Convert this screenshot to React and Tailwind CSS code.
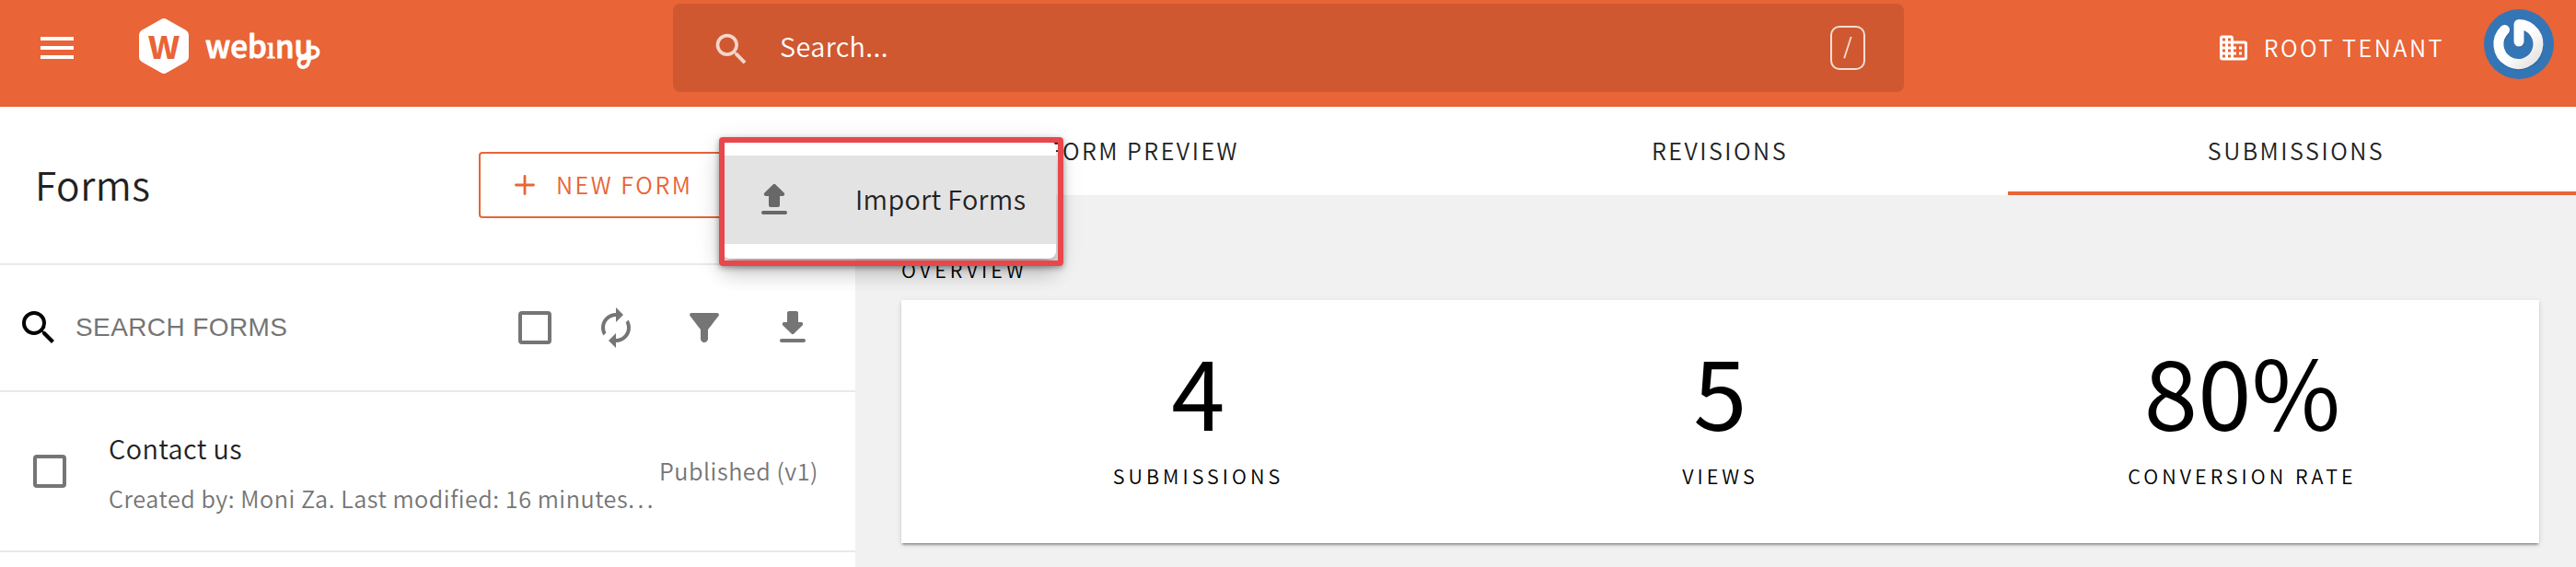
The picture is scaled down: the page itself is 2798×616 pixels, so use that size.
import { MdMenu, MdSearch, MdAutorenew } from "react-icons/md";

function Logo() {
  return (
    <div className="ml-[65px] flex h-[116px] w-[200px] shrink-0 items-start pt-5">
      <svg className="h-[60px] w-[54px] shrink-0 overflow-visible" viewBox="0 0 54 60">
        <path
          fill="#fff"
          d="M24 .9Q27-.9 30 .9L50.500 12.500Q54 14.600 54 18.500V41.500Q54 45.400 50.500 47.500L30 59.100Q27 60.900 24 59.100L3.500 47.500Q0 45.400 0 41.500V18.500Q0 14.600 3.500 12.500Z"
        />
        <text x="9" y="44" textLength="36" lengthAdjust="spacingAndGlyphs" fontFamily="Noto Sans CJK SC" fontWeight="700" fontSize="44" fill="#e96437">
          w
        </text>
      </svg>
      <svg className="ml-[17px] h-[60px] w-[130px] shrink-0 overflow-visible" viewBox="0 0 130 60" aria-label="webiny">
        <text x="1" y="42.5" textLength="117" lengthAdjust="spacingAndGlyphs" fontFamily="Noto Sans CJK SC" fontWeight="500" fontSize="34" fill="#fff" stroke="#fff" strokeWidth="1" strokeLinejoin="round">
          webınu
        </text>
        <path d="M117 31.500C124.500 30.500 126.500 40.500 118 42.500C111 44 103.500 41 102.500 47.500C101.500 54.500 112 55 113 47.500L114 45" fill="none" stroke="#fff" strokeWidth="4" strokeLinecap="round" />
      </svg>
    </div>
  );
}

function TenantIcon() {
  return (
    <svg className="mt-[2px] mr-[15px] size-9" viewBox="0 0 24 24" fill="currentColor">
      <path
        fillRule="evenodd"
        d="M4 3h6a2 2 0 0 1 2 2v2h8a2 2 0 0 1 2 2v10a2 2 0 0 1-2 2H4a2 2 0 0 1-2-2V5a2 2 0 0 1 2-2zM4 5v2h2V5zM8 5v2h2V5zM4 9v2h2V9zM8 9v2h2V9zM4 13v2h2v-2zM8 13v2h2v-2zM4 17v2h2v-2zM8 17v2h2v-2zM12 9h8v10h-8v-2h2v-2h-2v-2h2v-2h-2zM16 11v2h2v-2zM16 15v2h2v-2z"
      />
    </svg>
  );
}

function Avatar() {
  return (
    <svg className="mt-[10px] mr-6 size-[76px] shrink-0" viewBox="0 0 76 76">
      <defs>
        <linearGradient id="ring" x1="0" y1="0" x2="1" y2="1">
          <stop offset=".5" stopColor="#fff" />
          <stop offset="1" stopColor="#e2e0de" />
        </linearGradient>
      </defs>
      <circle cx="38" cy="38" r="38" fill="#3475b5" />
      <g fill="none" strokeLinecap="round" strokeLinejoin="round" strokeWidth="11">
        <path d="M22.500 22.500A21.500 21.500 0 1 0 38 16.500V35" stroke="#1f5288" strokeOpacity=".45" transform="translate(.6 1.2)" />
        <path d="M22.500 22.500A21.500 21.500 0 1 0 38 16.500V35" stroke="url(#ring)" />
      </g>
    </svg>
  );
}

function Header() {
  return (
    <header className="flex h-[116px] shrink-0 items-start bg-[#e96437] text-white">
      <MdMenu className="mt-7 ml-[38px] size-12 shrink-0" />
      <Logo />
      <div className="ml-[380px] mt-1 flex h-24 w-[1337px] shrink-0 items-center rounded-lg bg-[#cf5830] pr-[42px] pl-[41px]">
        <MdSearch className="mt-[2px] size-[45px] text-white/75" />
        <span className="ml-[30px] pb-[3px] text-[28.8px] leading-none tracking-[0.4px]">Search...</span>
        <span className="ml-auto flex h-12 w-[38px] items-center justify-center rounded-[10px] border-2 border-white/80 pb-[7px] text-[24px] leading-none text-white/90">
          /
        </span>
      </div>
      <div className="ml-auto flex h-[102px] items-center pr-[43px] text-[25.2px] leading-none tracking-[2.5px]">
        <TenantIcon />
        <span className="pt-[2px]">ROOT TENANT</span>
      </div>
      <Avatar />
    </header>
  );
}

function Checkbox() {
  return <span className="size-9 shrink-0 rounded-[4px] border-4 border-[#757575]" />;
}

function FormsPanel() {
  return (
    <section className="flex w-[929px] shrink-0 flex-col">
      <div className="flex h-[172px] items-center justify-between border-b-2 border-[#e9e9e9] pl-[38px]">
        <h1 className="pb-[2px] text-[42.5px] leading-none tracking-[0.5px] text-[#222]">Forms</h1>
        <button className="flex h-[72px] w-[409px] items-center rounded-[4px] border-2 border-[#e96437] pl-[37px] text-[#e96437]">
          <svg className="size-[22px]" viewBox="0 0 22 22" stroke="currentColor" strokeWidth="2.8" strokeLinecap="round">
            <path d="M1.500 11h19M11 1.500v19" />
          </svg>
          <span className="ml-[23px] text-[25.2px] leading-none tracking-[2.5px]">NEW FORM</span>
        </button>
      </div>

      <div className="flex h-[138px] items-center border-b-2 border-[#e9e9e9] pr-11 pl-[18px] text-[#757575]">
        <MdSearch className="size-12 text-black" />
        <span className="ml-4 font-['Liberation_Sans',Arial,sans-serif] text-[28px] leading-none tracking-[0.4px]">SEARCH FORMS</span>
        <div className="ml-auto flex items-center gap-12">
          <div className="-mr-[2px]">
            <div className="flex size-9">
              <Checkbox />
            </div>
          </div>
          <MdAutorenew className="size-12" />
          <svg className="size-12" viewBox="0 0 24 24" fill="currentColor">
            <path d="M4.250 5.610C6.570 8.590 10 13 10 13v5c0 1.100.9 2 2 2s2-.9 2-2v-5s3.430-4.410 5.750-7.390C20.260 4.950 19.790 4 18.950 4H5.040c-.83 0-1.300.95-.79 1.610z" />
          </svg>
          <svg className="size-12" viewBox="0 0 24 24" fill="currentColor">
            <path d="M16.590 9H15V4c0-.55-.45-1-1-1h-4c-.55 0-1 .45-1 1v5H7.410c-.89 0-1.340 1.080-.71 1.710l4.590 4.590c.39.39 1.020.39 1.410 0l4.590-4.590c.63-.63.19-1.710-.7-1.710zM5 19c0 .55.45 1 1 1h12c.55 0 1-.45 1-1s-.45-1-1-1H6c-.55 0-1 .45-1 1z" />
          </svg>
        </div>
      </div>

      <div className="flex h-[174px] items-center border-b-2 border-[#e9e9e9] pr-10 pl-9">
        <Checkbox />
        <div className="ml-[46px] flex flex-col gap-[18px] pt-[3px]">
          <div className="text-[28.8px] leading-9 tracking-[0.4px] text-[#222]">Contact us</div>
          <div className="text-[25.2px] leading-9 tracking-[0.53px] whitespace-nowrap text-[#757575]">
            Created by: Moni Za. Last modified: 16 minutes<span className="tracking-[3.5px]">...</span>
          </div>
        </div>
        <div className="ml-auto text-[25.2px] leading-none tracking-[0.55px] whitespace-nowrap text-[#757575]">Published (v1)</div>
      </div>
    </section>
  );
}

function Tab({ label, active }) {
  return (
    <div className="flex w-[626px] shrink-0 flex-col">
      <div className="flex h-[92px] items-center justify-center pt-1 text-[25.2px] leading-none tracking-[2.5px] text-[#222]">{label}</div>
      <div className={active ? "h-1 bg-[#e96437]" : "h-1"} />
    </div>
  );
}

function Stat({ value, label }) {
  return (
    <div className="flex flex-1 flex-col items-center text-black">
      <div className="text-[105px] leading-none font-normal">{value}</div>
      <div className="mt-[30px] text-[21.6px] leading-6 tracking-[4px]">{label}</div>
    </div>
  );
}

function Details() {
  return (
    <section className="flex min-w-0 flex-1 flex-col overflow-hidden">
      <div className="flex h-24 shrink-0">
        <Tab label="FORM PREVIEW" />
        <Tab label="REVISIONS" />
        <Tab label="SUBMISSIONS" active />
      </div>
      <div className="flex-1 bg-[#f1f1f1] pt-[69px] pr-10 pl-[50px]">
        <h2 className="text-[21.6px] leading-6 tracking-[4.1px] text-black">OVERVIEW</h2>
        <div className="mt-[21px] flex h-[264px] bg-white px-[39px] pt-[44px] shadow-[0_4px_2px_-2px_rgba(0,0,0,0.2),0_2px_2px_0_rgba(0,0,0,0.14),0_2px_6px_0_rgba(0,0,0,0.12)]">
          <Stat value="4" label="SUBMISSIONS" />
          <Stat value="5" label="VIEWS" />
          <Stat value="80%" label="CONVERSION RATE" />
        </div>
      </div>
    </section>
  );
}

function ImportMenu() {
  return (
    <>
      <div className="absolute top-[153px] left-[785px] h-32 w-[362px] rounded-lg bg-white pt-4 shadow-[0_10px_10px_-6px_rgba(0,0,0,0.2),0_16px_20px_2px_rgba(0,0,0,0.14),0_6px_28px_4px_rgba(0,0,0,0.12)]">
        <div className="flex h-24 items-center bg-[#e3e3e3] pl-8">
          <svg className="size-12 text-[#686868]" viewBox="0 0 24 24" fill="currentColor">
            <path d="M10 16h4c.55 0 1-.45 1-1v-5h1.590c.89 0 1.340-1.080.71-1.710L12.710 3.700c-.39-.39-1.020-.39-1.410 0L6.710 8.290c-.63.63-.19 1.710.7 1.710H9v5c0 .55.45 1 1 1zM6 18h12c.55 0 1 .45 1 1s-.45 1-1 1H6c-.55 0-1-.45-1-1s.45-1 1-1z" />
          </svg>
          <span className="ml-[64px] pb-[2px] text-[28.8px] leading-none tracking-[0.35px] whitespace-nowrap text-[#222]">Import Forms</span>
        </div>
      </div>
      <div className="absolute top-[149px] left-[781px] h-[140px] w-[374px] rounded-[4px] border-6 border-[#e8474c] shadow-[0_2px_6px_rgba(0,0,0,0.35)]" />
    </>
  );
}

export default function App() {
  return (
    <div className="relative flex h-[616px] w-[2798px] flex-col overflow-hidden bg-white font-['Noto_Sans_CJK_SC',sans-serif] font-[350]">
      <Header />
      <main className="flex flex-1">
        <FormsPanel />
        <Details />
      </main>
      <ImportMenu />
    </div>
  );
}
